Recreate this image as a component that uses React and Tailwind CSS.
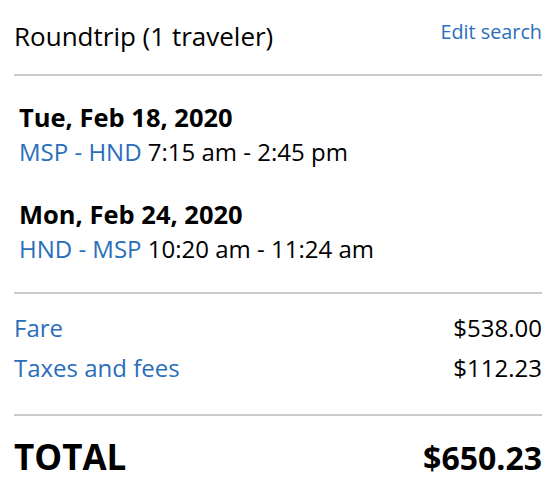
const segments = [
  { date: "Tue, Feb 18, 2020", route: "MSP - HND", times: "7:15 am - 2:45 pm" },
  { date: "Mon, Feb 24, 2020", route: "HND - MSP", times: "10:20 am - 11:24 am" },
];

const charges = [
  { label: "Fare", amount: "$538.00" },
  { label: "Taxes and fees", amount: "$112.23" },
];

export default function App() {
  return (
    <div
      className="min-h-screen w-[558px] bg-white pl-[14px] pr-[16px] text-black"
      style={{ fontFamily: '"Open Sans", "Liberation Sans", sans-serif' }}
    >
      {/* Header */}
      <div className="flex items-start justify-between pt-[20px]">
        <h1 className="text-[26px] leading-[32px] font-normal">Roundtrip (1 traveler)</h1>
        <a href="#" className="text-[19.8px] leading-[24px] text-[#2a6ebb]">
          Edit search
        </a>
      </div>
      <div className="mt-[22px] h-[2px] bg-[#cccccc]" />

      {/* Flights */}
      <div className="pl-[5px] pt-[24px] pb-[26px] space-y-[28px]">
        {segments.map((s) => (
          <div key={s.date}>
            <p className="text-[25.5px] leading-[34px] font-bold">{s.date}</p>
            <p className="text-[24px] leading-[35px]">
              <span className="text-[#2a6ebb]">{s.route}</span> {s.times}
            </p>
          </div>
        ))}
      </div>
      <div className="h-[2px] bg-[#cccccc]" />

      {/* Price breakdown */}
      <div className="pt-[14px] pb-[26px]">
        {charges.map((c) => (
          <div key={c.label} className="flex justify-between text-[24px] leading-[40px]">
            <span className="text-[#2a6ebb]">{c.label}</span>
            <span>{c.amount}</span>
          </div>
        ))}
      </div>
      <div className="h-[2px] bg-[#cccccc]" />

      {/* Total */}
      <div className="flex items-baseline justify-between pt-[21px] leading-[40px] font-bold">
        <span className="text-[35px]">TOTAL</span>
        <span className="text-[32px]">$650.23</span>
      </div>
    </div>
  );
}
